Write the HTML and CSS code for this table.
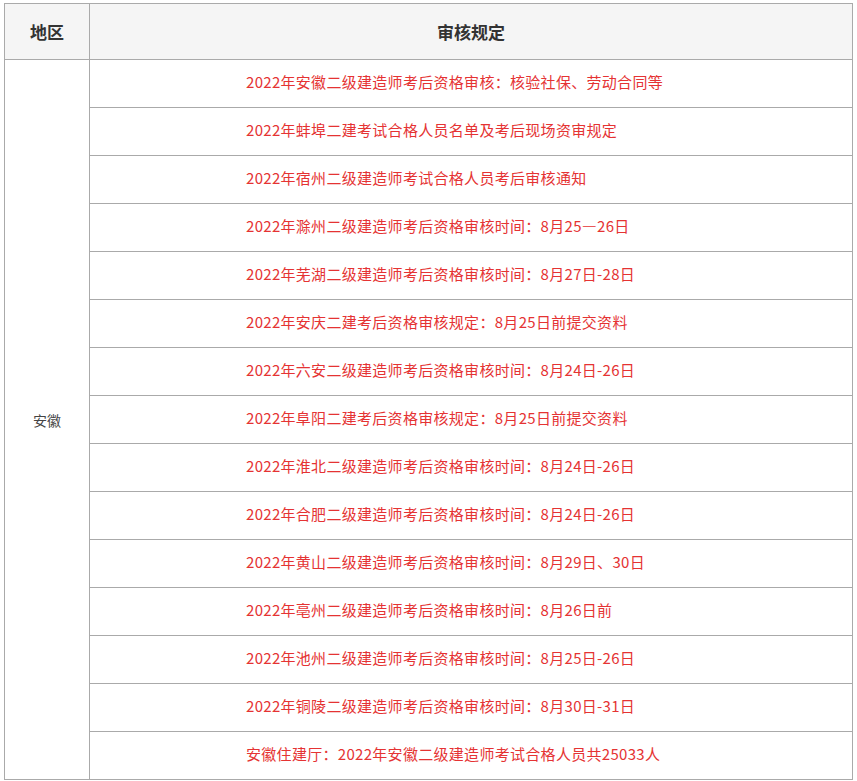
FILE: index.html
```html
<!DOCTYPE html>
<html lang="zh-CN">
<head>
<meta charset="utf-8">
<link rel="stylesheet" href="styles.css">
</head>
<body>
<div class="wrap">
<table class="tbl">
<thead>
<tr><th class="c1">地区</th><th>审核规定</th></tr>
</thead>
<tbody>
<tr><td class="c1 region" rowspan="15">安徽</td><td class="red">2022年安徽二级建造师考后资格审核：核验社保、劳动合同等</td></tr>
<tr><td class="red">2022年蚌埠二建考试合格人员名单及考后现场资审规定</td></tr>
<tr><td class="red">2022年宿州二级建造师考试合格人员考后审核通知</td></tr>
<tr><td class="red">2022年滁州二级建造师考后资格审核时间：8月25—26日</td></tr>
<tr><td class="red">2022年芜湖二级建造师考后资格审核时间：8月27日-28日</td></tr>
<tr><td class="red">2022年安庆二建考后资格审核规定：8月25日前提交资料</td></tr>
<tr><td class="red">2022年六安二级建造师考后资格审核时间：8月24日-26日</td></tr>
<tr><td class="red">2022年阜阳二建考后资格审核规定：8月25日前提交资料</td></tr>
<tr><td class="red">2022年淮北二级建造师考后资格审核时间：8月24日-26日</td></tr>
<tr><td class="red">2022年合肥二级建造师考后资格审核时间：8月24日-26日</td></tr>
<tr><td class="red">2022年黄山二级建造师考后资格审核时间：8月29日、30日</td></tr>
<tr><td class="red">2022年亳州二级建造师考后资格审核时间：8月26日前</td></tr>
<tr><td class="red">2022年池州二级建造师考后资格审核时间：8月25日-26日</td></tr>
<tr><td class="red">2022年铜陵二级建造师考后资格审核时间：8月30日-31日</td></tr>
<tr><td class="red">安徽住建厅：2022年安徽二级建造师考试合格人员共25033人</td></tr>
</tbody>
</table>
</div>
</body>
</html>
```

FILE: styles.css
```css
html, body {
  margin: 0;
  padding: 0;
  background: #fff;
}
.wrap {
  padding: 3px 4px 0 4px;
}
.tbl {
  width: 849px;
  border-collapse: collapse;
  font-family: "Noto Sans CJK SC", "Noto Sans", sans-serif;
  font-size: 15px;
  color: #333;
}
.tbl th, .tbl td {
  border: 1px solid #aaa;
  text-align: center;
  padding: 0;
  line-height: 20px;
}
.tbl th {
  height: 55px;
  background: #f5f5f5;
  font-size: 17px;
  font-weight: bold;
  color: #333;
}
.tbl td {
  height: 47px;
}
.c1 {
  width: 84px;
}
.tbl td.region {
  font-size: 14px;
  color: #444;
}
.tbl td.red {
  color: #e53333;
  text-align: left;
  padding: 0 0 4px 156px;
  height: 43px;
  letter-spacing: 0.3px;
}
```
